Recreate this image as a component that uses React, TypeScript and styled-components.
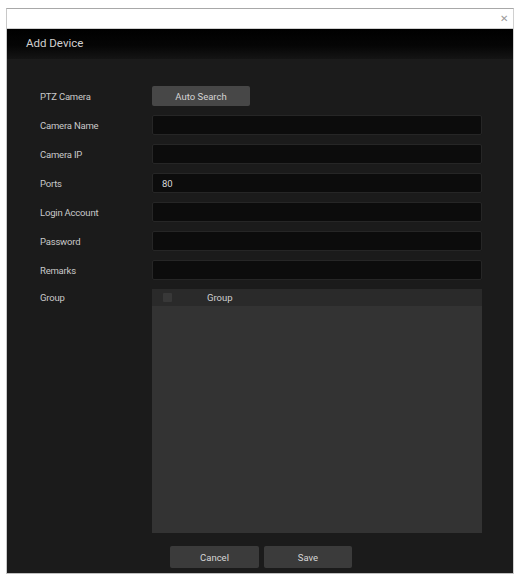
import React from 'react'
import styled, { createGlobalStyle } from 'styled-components'

const GlobalStyle = createGlobalStyle`
html, body {
  margin: 0;
  padding: 0;
  background: #ffffff;
  font-family: Roboto, "Liberation Sans", Arial, sans-serif;
}
`

const Page = styled.div`
padding: 8px 4px 2px 6px;
`

const Window = styled.div`
width: 508px;
height: 566px;
display: flex;
flex-direction: column;
border-top: 1px solid #a8a8a8;
border-left: 1px solid #c8c8c8;
border-right: 1px solid #d0d0d0;
border-bottom: 1px solid #c0c0c0;
box-sizing: border-box;
`

const TopBar = styled.div`
flex-shrink: 0;
height: 19px;
background: #ffffff;
display: flex;
justify-content: flex-end;
align-items: center;
padding-right: 5px;
border-bottom: 1px solid #d0d0d0;
`

const Close = styled.span`
color: #9a9a9a;
font-size: 10px;
line-height: 1;
`

const TitleBar = styled.div`
flex-shrink: 0;
height: 30px;
background: linear-gradient(#000000 0%, #050505 55%, #141414 100%);
color: #d0d0d0;
font-size: 11.5px;
display: flex;
align-items: center;
padding-left: 19px;
padding-bottom: 3px;
box-sizing: border-box;
`

const Body = styled.div`
flex: 1;
min-height: 0;
background: #1b1b1b;
padding: 27px 30px 0 32px;
display: flex;
flex-direction: column;
`

const Form = styled.div`
display: grid;
grid-template-columns: 113px 330px;
row-gap: 9px;
`

const Label = styled.div<{ short?: boolean }>`
height: ${p => (p.short ? 17 : 20)}px;
display: flex;
align-items: center;
color: #c9c9c9;
font-size: 9.5px;
letter-spacing: -0.2px;
padding-left: 1px;
`

const Input = styled.div`
height: 20px;
background: #0c0c0c;
border: 1px solid #262626;
border-radius: 2px;
box-sizing: border-box;
color: #d8d8d8;
font-size: 9.5px;
display: flex;
align-items: center;
padding-left: 9px;
`

const SearchButton = styled.div`
width: 98px;
height: 20px;
background: #474747;
border-radius: 2px;
color: #d4d4d4;
font-size: 9.5px;
display: flex;
align-items: center;
justify-content: center;
`

const GroupPanel = styled.div`
height: 244px;
background: #333333;
display: flex;
flex-direction: column;
`

const GroupHeader = styled.div`
height: 17px;
background: #2a2a2a;
display: flex;
align-items: center;
color: #cfcfcf;
font-size: 9.5px;
`

const Check = styled.span`
width: 9px;
height: 9px;
margin: 0 35px 0 11px;
background: #383838;
border-radius: 1px;
`

const Footer = styled.div`
margin-top: 13px;
display: flex;
justify-content: center;
gap: 5px;
`

const Button = styled.div<{ wide?: boolean }>`
width: ${p => (p.wide ? 89 : 88)}px;
height: 22px;
background: #3b3b3b;
border-radius: 2px;
color: #d6d6d6;
font-size: 9.5px;
display: flex;
align-items: center;
justify-content: center;
`

const fields = [
  { label: 'Camera Name', value: '' },
  { label: 'Camera IP', value: '' },
  { label: 'Ports', value: '80' },
  { label: 'Login Account', value: '' },
  { label: 'Password', value: '' },
  { label: 'Remarks', value: '' }
]

const App = () => {
  return (
    <Page>
      <GlobalStyle />
      <Window>
        <TopBar>
          <Close>✕</Close>
        </TopBar>
        <TitleBar>Add Device</TitleBar>
        <Body>
          <Form>
            <Label>PTZ Camera</Label>
            <div>
              <SearchButton>Auto Search</SearchButton>
            </div>
            {fields.map(f => (
              <React.Fragment key={f.label}>
                <Label>{f.label}</Label>
                <Input>{f.value}</Input>
              </React.Fragment>
            ))}
            <Label short>Group</Label>
            <GroupPanel>
              <GroupHeader>
                <Check />
                Group
              </GroupHeader>
            </GroupPanel>
          </Form>
          <Footer>
            <Button wide>Cancel</Button>
            <Button>Save</Button>
          </Footer>
        </Body>
      </Window>
    </Page>
  )
}

export default App
